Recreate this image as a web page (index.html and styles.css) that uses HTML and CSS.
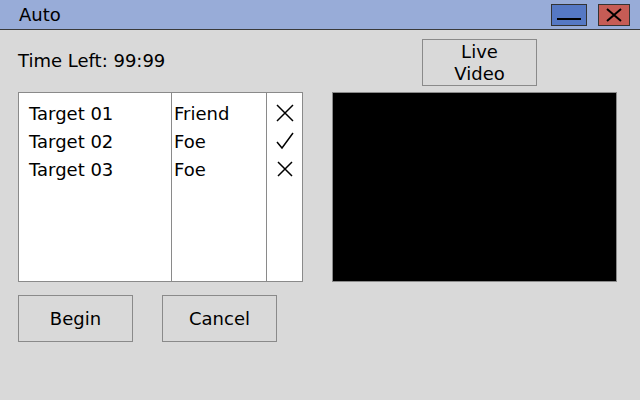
FILE: index.html
```html
<!DOCTYPE html>
<html>
<head>
<meta charset="utf-8">
<link rel="stylesheet" href="styles.css">
</head>
<body>
<div class="window">
  <div class="titlebar">
    <span class="title">Auto</span>
    <div class="controls">
      <div class="ctrl min"><span class="bar"></span></div>
      <div class="ctrl close">
        <svg width="24" height="16" viewBox="0 0 24 16"><path d="M5 2 L19 14 M19 2 L5 14" stroke="#000" stroke-width="2" fill="none"/></svg>
      </div>
    </div>
  </div>
  <div class="content">
    <div class="columns">
      <div class="col">
        <div class="time">Time Left: 99:99</div>
        <div class="table">
          <div class="tcol c1">
            <div class="cell">Target 01</div>
            <div class="cell">Target 02</div>
            <div class="cell">Target 03</div>
          </div>
          <div class="tcol c2">
            <div class="cell">Friend</div>
            <div class="cell">Foe</div>
            <div class="cell">Foe</div>
          </div>
          <div class="tcol c3">
            <div class="cell"><svg width="20" height="20" viewBox="0 0 20 20"><path d="M2 2 L18 18 M18 2 L2 18" stroke="#000" stroke-width="1.5" fill="none"/></svg></div>
            <div class="cell"><svg width="20" height="20" viewBox="0 0 20 20"><path d="M2 11 L7 17 L18 2" stroke="#000" stroke-width="1.5" fill="none"/></svg></div>
            <div class="cell"><svg width="20" height="20" viewBox="0 0 20 20"><path d="M3 3 L17 17 M17 3 L3 17" stroke="#000" stroke-width="1.5" fill="none"/></svg></div>
          </div>
        </div>
      </div>
      <div class="col">
        <button class="btn live">Live<br>Video</button>
        <div class="video"></div>
      </div>
    </div>
    <div class="actions">
      <button class="btn">Begin</button>
      <button class="btn">Cancel</button>
    </div>
  </div>
</div>
</body>
</html>
```
FILE: styles.css
```css
html, body {
  margin: 0;
  padding: 0;
}
body {
  width: 640px;
  height: 400px;
  background: #d9d9d9;
  font-family: "DejaVu Sans", sans-serif;
  font-size: 18px;
  color: #000;
  overflow: hidden;
}
.titlebar {
  height: 29px;
  background: #98acd8;
  border-bottom: 1px solid #3a3a3a;
  display: flex;
  align-items: center;
  justify-content: space-between;
  padding: 0 10px 0 19px;
}
.title {
  font-size: 18px;
}
.controls {
  display: flex;
  gap: 11px;
  align-items: center;
}
.ctrl {
  width: 34px;
  height: 20px;
  border: 1px solid #333;
  display: flex;
  align-items: center;
  justify-content: center;
  box-sizing: content-box;
}
.ctrl.min {
  background: #5578c4;
  align-items: flex-end;
}
.ctrl.min .bar {
  width: 24px;
  height: 2px;
  background: #000;
  margin-bottom: 5px;
}
.ctrl.close {
  width: 30px;
  background: #c65c55;
}
.content {
  padding: 9px 18px 0;
}
.columns {
  display: flex;
  gap: 29px;
}
.col {
  width: 285px;
  display: flex;
  flex-direction: column;
}
.time {
  height: 53px;
  padding-top: 11px;
  box-sizing: border-box;
}
.table {
  height: 190px;
  box-sizing: border-box;
  border: 1px solid #8a8a8a;
  background: #fff;
  display: flex;
}
.tcol {
  padding-top: 6px;
}
.c1 {
  width: 153px;
  padding-left: 10px;
  box-sizing: border-box;
  border-right: 1px solid #8a8a8a;
}
.c2 {
  width: 95px;
  padding-left: 2px;
  box-sizing: border-box;
  border-right: 1px solid #8a8a8a;
}
.c3 {
  flex: 1;
  display: flex;
  flex-direction: column;
  align-items: center;
}
.cell {
  height: 28px;
  display: flex;
  align-items: center;
}
.btn {
  width: 115px;
  height: 47px;
  background: #d9d9d9;
  border: 1px solid #8a8a8a;
  font-family: "DejaVu Sans", sans-serif;
  font-size: 18px;
  color: #000;
  padding: 0;
  line-height: 22px;
}
.live {
  margin-left: 90px;
  margin-bottom: 6px;
}
.video {
  height: 190px;
  box-sizing: border-box;
  background: #000;
  border: 1px solid #8a8a8a;
}
.actions {
  display: flex;
  gap: 29px;
  margin-top: 13px;
}
```
